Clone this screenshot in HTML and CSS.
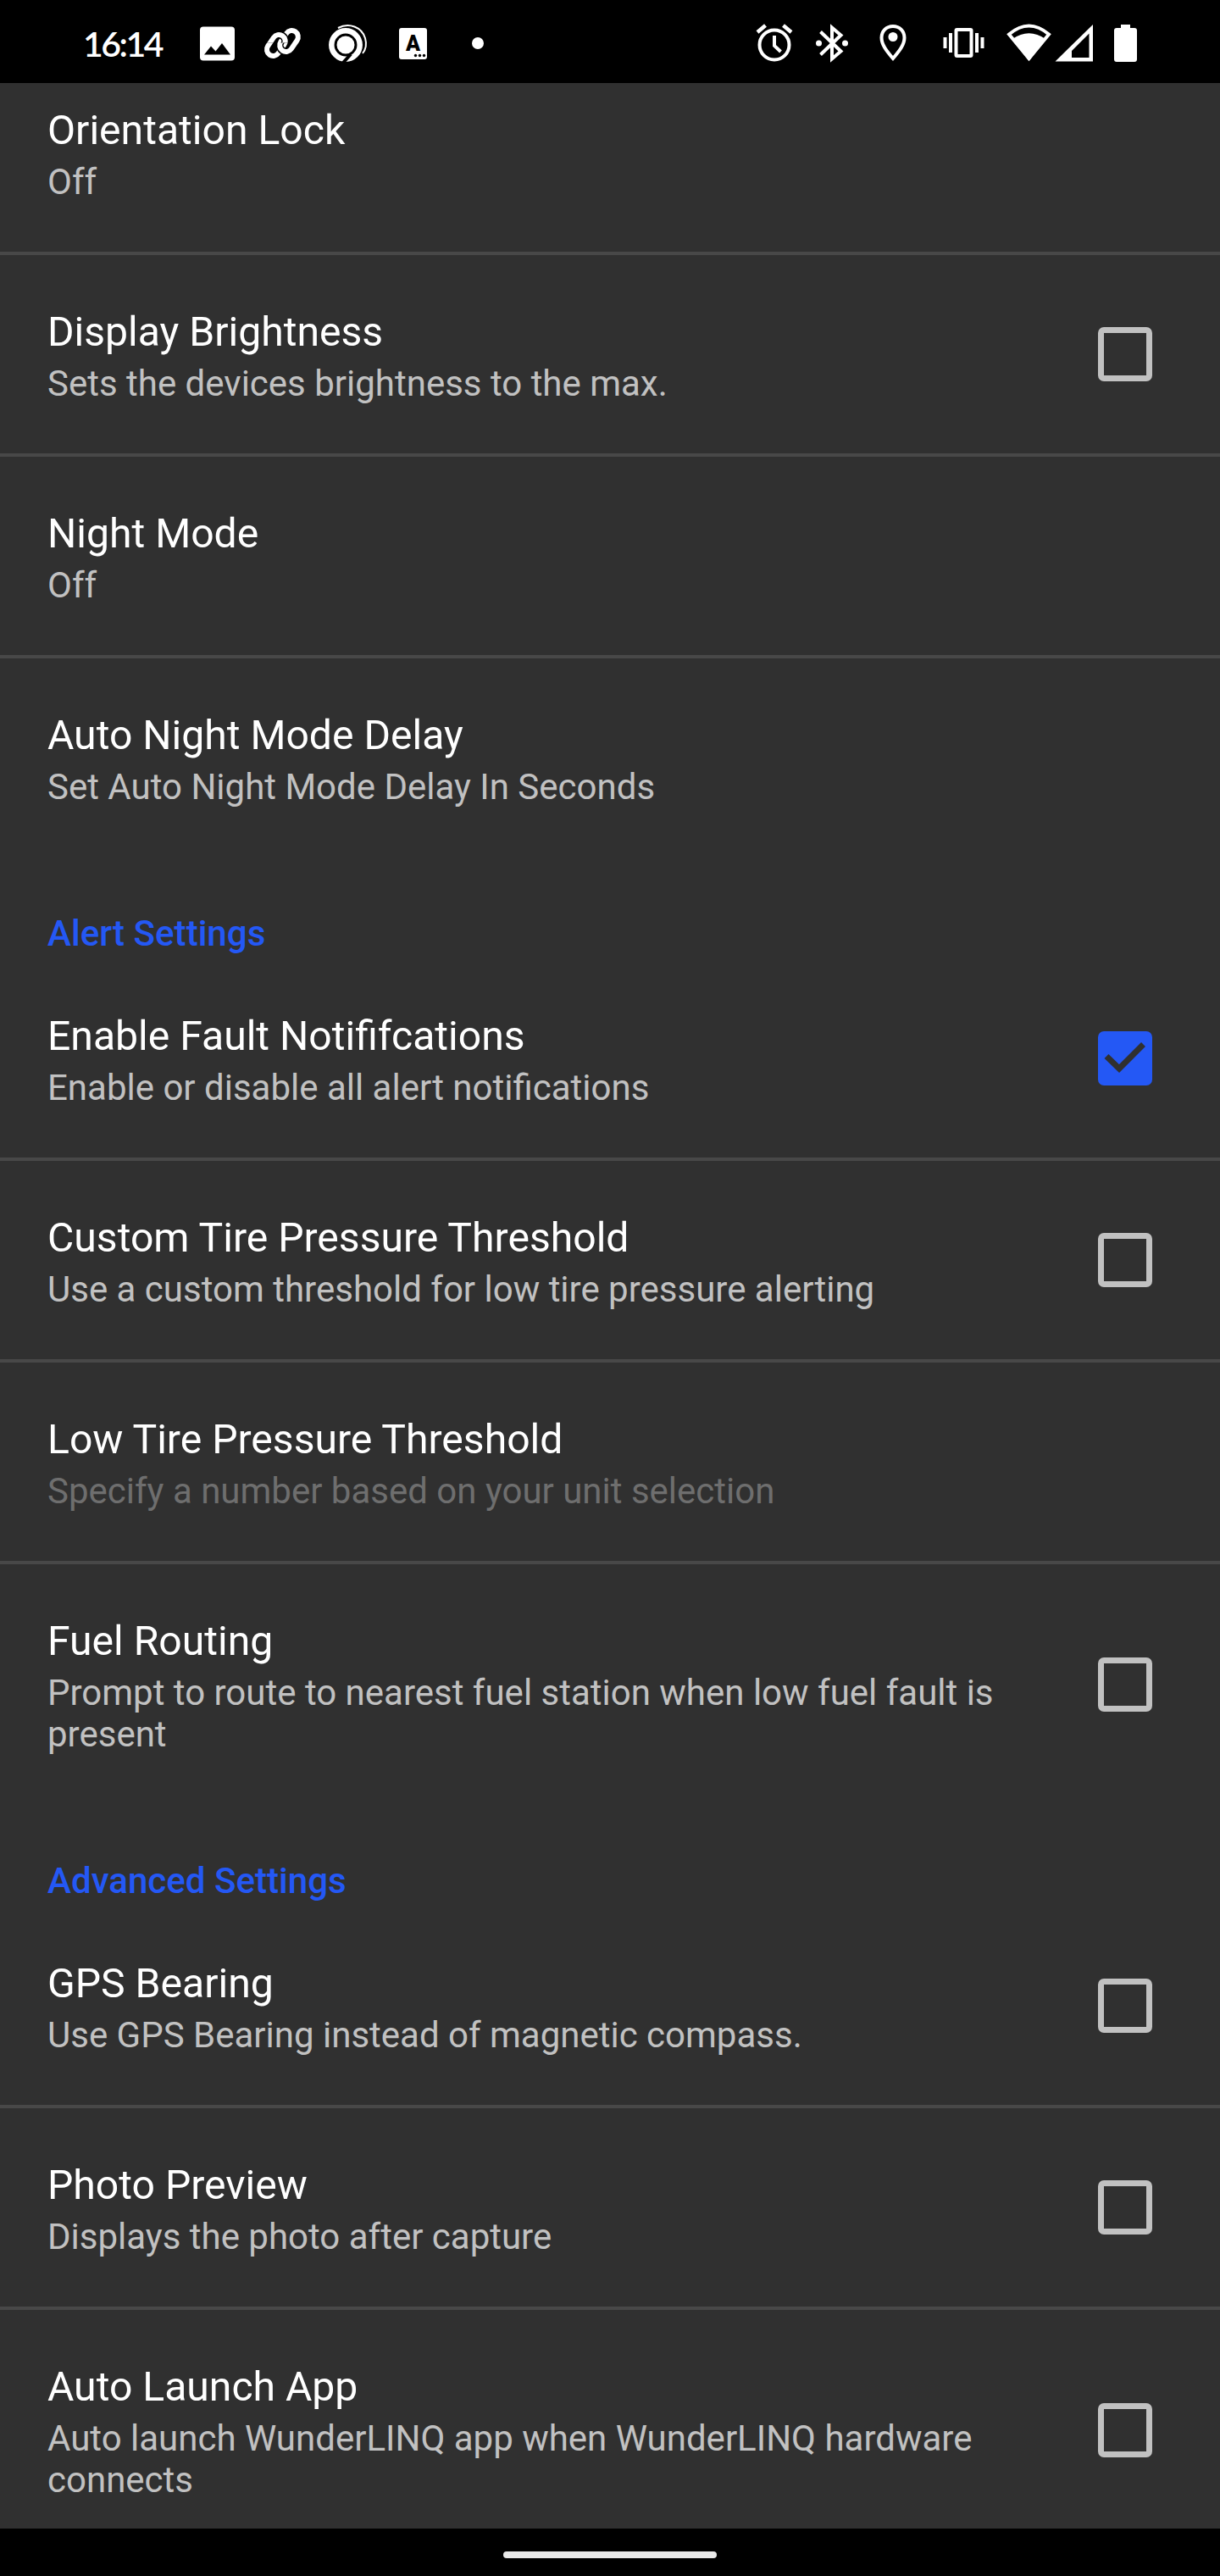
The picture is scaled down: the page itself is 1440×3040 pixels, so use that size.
FILE: index.html
```html
<!DOCTYPE html>
<html lang="en">
<head>
<meta charset="utf-8">
<title>Settings</title>
<link rel="stylesheet" href="styles.css">
</head>
<body>
<div class="screen">
  <header class="status-bar">
    <span class="clock">16:14</span>
    <svg class="status-icons" viewBox="220 0 1220 98" fill="none" stroke="none">
      <defs>
        <rect id="link-left" x="-7.500" y="-13.500" width="15" height="27" rx="7.500" transform="translate(325.800 53.500) rotate(34)"/>
        <rect id="link-right" x="-7.500" y="-13.500" width="15" height="27" rx="7.500" transform="translate(341 48.500) rotate(34)"/>
        <clipPath id="upper-half"><rect x="308" y="28" width="52" height="22.500"/></clipPath>
      </defs>
      <g fill="#fff">
        <path fill-rule="evenodd" d="M240 31.500h33a4 4 0 0 1 4 4v32a4 4 0 0 1-4 4h-33a4 4 0 0 1-4-4v-32a4 4 0 0 1 4-4zM241 64.500h31l-10-13.500-7.500 9.500-5.500-6z"/>
        <g fill="none" stroke="#fff" stroke-width="6">
          <use href="#link-left"/>
          <use href="#link-right" stroke="#000" stroke-width="9"/>
          <use href="#link-right"/>
          <g clip-path="url(#upper-half)">
            <use href="#link-left" stroke="#000" stroke-width="9"/>
            <use href="#link-left"/>
          </g>
        </g>
        <circle cx="408" cy="53" r="10.500"/>
        <circle cx="408" cy="53" r="16.700" fill="none" stroke="#fff" stroke-width="6.500"/>
        <path d="M399 33c13-7 28-1 32 12 2 7 1 13-3 18" fill="none" stroke="#fff" stroke-width="2"/>
        <path d="M414 64l-9 10" stroke="#000" stroke-width="4"/>
        <rect x="471" y="33" width="33" height="37" rx="3"/>
        <circle cx="564" cy="51" r="7"/>
      </g>
      <g fill="#000"><circle cx="490.500" cy="65.500" r="1.700"/><circle cx="495.500" cy="65.500" r="1.700"/><circle cx="500.500" cy="65.500" r="1.700"/></g>
      <text class="badge-letter" x="487.500" y="59.500" text-anchor="middle">A</text>

      <g stroke="#fff" stroke-width="4">
        <circle cx="914" cy="53" r="17.500"/>
        <path d="M894 38l9.500-8M934 38l-9.500-8" stroke-width="4.500"/>
        <path d="M914 42v12l7.500 7"/>
        <path d="M968.500 37.500l24 23-10.500 9V32.500l10.500 9-24 23" stroke-width="4"/>
        <path d="M1054 31c-8 0-13.500 6-13.500 13.500 0 8 5.500 15 13.500 24.500 8-9.500 13.500-16.500 13.500-24.500C1067.500 37 1062 31 1054 31z"/>
        <rect x="1128.500" y="35" width="18" height="31" rx="1"/>
        <path d="M1122 39v23M1153 39v23M1115.500 44v13M1159.500 44v13"/>
        <path d="M1191 40.500q23.500-20 47 0L1214.500 69z"/>
      </g>
      <g fill="#fff">
        <circle cx="966.500" cy="51" r="3.500"/><circle cx="997.500" cy="51" r="3.500"/>
        <circle cx="1054" cy="43.500" r="5.500"/>
        <path d="M1195 46q19.500-13.500 39 0l-19.500 26z"/>
        <path fill-rule="evenodd" d="M1290 29v43.500h-44.500zM1285.500 39.500l-20.500 20.500v8h20.500z"/>
        <path d="M1323 29h11v4h5a3 3 0 0 1 3 3v34a3 3 0 0 1-3 3h-21a3 3 0 0 1-3-3V36a3 3 0 0 1 3-3h5z"/>
      </g>
    </svg>
  </header>

  <main class="settings">
    <section class="group group-first">
      <div class="row"><div class="text"><div class="title">Orientation Lock</div><div class="summary">Off</div></div></div>
      <div class="row"><div class="text"><div class="title">Display Brightness</div><div class="summary">Sets the devices brightness to the max.</div></div><span class="checkbox"></span></div>
      <div class="row"><div class="text"><div class="title">Night Mode</div><div class="summary">Off</div></div></div>
      <div class="row"><div class="text"><div class="title">Auto Night Mode Delay</div><div class="summary">Set Auto Night Mode Delay In Seconds</div></div></div>
    </section>
    <section class="group">
      <h2 class="heading">Alert Settings</h2>
      <div class="row"><div class="text"><div class="title">Enable Fault Notififcations</div><div class="summary">Enable or disable all alert notifications</div></div><span class="checkbox checked"><svg viewBox="0 0 64 64"><path d="M10 29.500l15 14.500 28.500-28.500"/></svg></span></div>
      <div class="row"><div class="text"><div class="title">Custom Tire Pressure Threshold</div><div class="summary">Use a custom threshold for low tire pressure alerting</div></div><span class="checkbox"></span></div>
      <div class="row"><div class="text"><div class="title">Low Tire Pressure Threshold</div><div class="summary disabled">Specify a number based on your unit selection</div></div></div>
      <div class="row"><div class="text"><div class="title">Fuel Routing</div><div class="summary">Prompt to route to nearest fuel station when low fuel fault is present</div></div><span class="checkbox"></span></div>
    </section>
    <section class="group">
      <h2 class="heading">Advanced Settings</h2>
      <div class="row"><div class="text"><div class="title">GPS Bearing</div><div class="summary">Use GPS Bearing instead of magnetic compass.</div></div><span class="checkbox"></span></div>
      <div class="row"><div class="text"><div class="title">Photo Preview</div><div class="summary">Displays the photo after capture</div></div><span class="checkbox"></span></div>
      <div class="row"><div class="text"><div class="title">Auto Launch App</div><div class="summary">Auto launch WunderLINQ app when WunderLINQ hardware connects</div></div><span class="checkbox"></span></div>
    </section>
  </main>

  <footer class="nav-bar"><span class="nav-handle"></span></footer>
</div>
</body>
</html>
```
FILE: styles.css
```css
* { box-sizing: border-box; }

body {
  margin: 0;
  background: #303030;
  font-family: Roboto, "Noto Sans", sans-serif;
}

.screen {
  display: flex;
  flex-direction: column;
  width: 1440px;
  height: 3040px;
  overflow: hidden;
}

.status-bar {
  display: flex;
  flex: 0 0 98px;
  align-items: center;
  padding-left: 98px;
  background: #000;
  color: #fff;
}

.clock {
  flex: 0 0 122px;
  padding-top: 6px;
  font: 600 41px/50px Lato, sans-serif;
  letter-spacing: -2.5px;
  white-space: nowrap;
}

.status-icons { width: 1220px; height: 98px; }

.badge-letter { font: 900 25px Roboto, sans-serif; fill: #000; }

.settings { flex: 1; overflow: hidden; }

.group-first { margin-top: -35px; }

.row {
  display: flex;
  align-items: center;
  justify-content: space-between;
  padding: 58px 80px 58px 56px;
}

.row + .row { border-top: 4px solid #484848; }

.text { max-width: 1160px; padding-top: 4px; }

.title { color: #fff; font-size: 48.1px; line-height: 57px; }

.summary { margin-top: 8px; color: #c1c1c1; font-size: 42px; line-height: 49px; }

.summary.disabled { color: #6e6e6e; }

.heading {
  margin: 0;
  padding: 66px 56px 6px;
  color: #2458f5;
  font-size: 42.1px;
  font-weight: 500;
  line-height: 49px;
}

.checkbox {
  flex: 0 0 64px;
  height: 64px;
  border: 7px solid #c1c1c1;
  border-radius: 7px;
}

.checkbox.checked { border: 0; background: #2458f5; }

.checkbox svg { display: block; width: 64px; height: 64px; }

.checkbox path { fill: none; stroke: #303030; stroke-width: 7; }

.nav-bar {
  display: flex;
  flex: 0 0 56px;
  align-items: center;
  justify-content: center;
  padding-top: 6px;
  background: #000;
}

.nav-handle { width: 252px; height: 8px; border-radius: 4px; background: #e9e9e9; }
```
